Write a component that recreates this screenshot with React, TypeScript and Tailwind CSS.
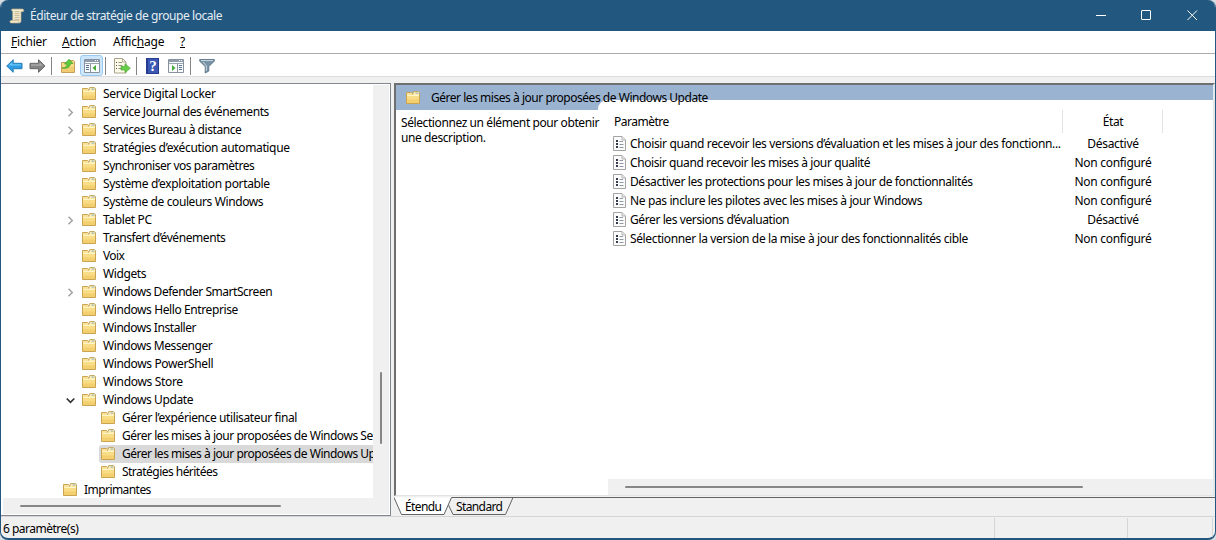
import type { ReactNode } from "react";

type TreeItem = {
  label: string;
  tracking: string;
  level?: number;
  state?: "closed" | "open";
  selected?: boolean;
};

const treeItems: TreeItem[] = [
  { label: "Service Digital Locker", tracking: "tracking-[-0.35px]" },
  { label: "Service Journal des événements", tracking: "tracking-[-0.42px]", state: "closed" },
  { label: "Services Bureau à distance", tracking: "tracking-[-0.45px]", state: "closed" },
  { label: "Stratégies d’exécution automatique", tracking: "tracking-[-0.36px]" },
  { label: "Synchroniser vos paramètres", tracking: "tracking-[-0.46px]" },
  { label: "Système d’exploitation portable", tracking: "tracking-[-0.34px]" },
  { label: "Système de couleurs Windows", tracking: "tracking-[-0.39px]" },
  { label: "Tablet PC", tracking: "tracking-[-0.37px]", state: "closed" },
  { label: "Transfert d’événements", tracking: "tracking-[-0.43px]" },
  { label: "Voix", tracking: "tracking-[-0.6px]" },
  { label: "Widgets", tracking: "tracking-[-0.4px]" },
  { label: "Windows Defender SmartScreen", tracking: "tracking-[-0.47px]", state: "closed" },
  { label: "Windows Hello Entreprise", tracking: "tracking-[-0.4px]" },
  { label: "Windows Installer", tracking: "tracking-[-0.44px]" },
  { label: "Windows Messenger", tracking: "tracking-[-0.44px]" },
  { label: "Windows PowerShell", tracking: "tracking-[-0.37px]" },
  { label: "Windows Store", tracking: "tracking-[-0.33px]" },
  { label: "Windows Update", tracking: "tracking-[-0.41px]", state: "open" },
  { label: "Gérer l’expérience utilisateur final", tracking: "tracking-[-0.39px]", level: 2 },
  { label: "Gérer les mises à jour proposées de Windows Se", tracking: "tracking-[-0.47px]", level: 2 },
  {
    label: "Gérer les mises à jour proposées de Windows Up",
    tracking: "tracking-[-0.47px]",
    level: 2,
    selected: true,
  },
  { label: "Stratégies héritées", tracking: "tracking-[-0.53px]", level: 2 },
  { label: "Imprimantes", tracking: "tracking-[-0.56px]", level: 0 },
];

const settings = [
  {
    name: "Choisir quand recevoir les versions d’évaluation et les mises à jour des fonctionn...",
    tracking: "tracking-[-0.353px]",
    state: "Désactivé",
  },
  {
    name: "Choisir quand recevoir les mises à jour qualité",
    tracking: "tracking-[-0.4px]",
    state: "Non configuré",
  },
  {
    name: "Désactiver les protections pour les mises à jour de fonctionnalités",
    tracking: "tracking-[-0.4px]",
    state: "Non configuré",
  },
  {
    name: "Ne pas inclure les pilotes avec les mises à jour Windows",
    tracking: "tracking-[-0.37px]",
    state: "Non configuré",
  },
  {
    name: "Gérer les versions d’évaluation",
    tracking: "tracking-[-0.4px]",
    state: "Désactivé",
  },
  {
    name: "Sélectionner la version de la mise à jour des fonctionnalités cible",
    tracking: "tracking-[-0.37px]",
    state: "Non configuré",
  },
];

const indents = ["pl-[58px]", "pl-[77px]", "pl-[96px]"];

function FolderIcon() {
  return (
    <svg className="w-4 h-4 shrink-0" viewBox="0 0 16 16" fill="none">
      <path d="M1.5 2.5h5l1 1h7v10h-13z" fill="#fbe29a" stroke="#c9a552" />
      <path d="M7.5 4.5l1.2-2.9h4.8l1 1v2" fill="#fff1bd" stroke="#c2a45c" />
      <path d="M10.500 2.500h3v1.200h-3z" fill="#9fb8b4" />
      <path d="M2 6h12v7H2z" fill="#f9dc86" />
      <path d="M2 9.500h12V13H2z" fill="#f4cf70" />
      <path d="M2 5.500h12" stroke="#fff3c8" />
    </svg>
  );
}

function ScrollIcon() {
  return (
    <svg className="w-4 h-4 shrink-0" viewBox="0 0 16 16" fill="none">
      <path
        d="M3.2 1h10.3c1.600.2 1.700 2.300.4 2.700H12v9.100c0 1.500-.7 2.200-1.700 2.200H2C.6 14.800.4 12.700 2 12.500h1.700V3.300C2.300 2.900 2.100 1.400 3.200 1z"
        fill="#f5ecd3"
        stroke="#b7a77d"
        strokeWidth=".7"
      />
      <path d="M5.500 3.700h5M5.500 5.700h5M5.500 7.700h5M5.500 9.700h5M5.500 11.700h5" stroke="#b3a481" strokeWidth=".8" />
      <path d="M2 12.600h7.500c.8.600.5 1.900 0 2.300" stroke="#c7b88f" strokeWidth=".8" />
    </svg>
  );
}

function SettingIcon() {
  return (
    <svg className="w-[13px] h-[15px] shrink-0" viewBox="0 0 13 15" fill="none">
      <path d="M.5.500h8.500l3.500 3.500v10.500H.5z" fill="#fbfbfb" stroke="#a3a3a3" />
      <path d="M9 .500V4h3.500" fill="#e6e6e6" stroke="#b5b5b5" />
      <path d="M3 4h2v2H3zM3 7h2v2H3zM3 10h2v2H3z" fill="#333b4a" />
      <path d="M6.500 5.500H10M6.500 8.500H10.500M6.500 11.500H10.500" stroke="#8f98a5" />
    </svg>
  );
}

function ArrowIcon({ forward = false }: { forward?: boolean }) {
  return (
    <svg className="w-[17px] h-4 shrink-0" viewBox="0 0 17 16">
      {forward ? (
        <>
          <path d="M16 8L9.500 1.700v3.600H1v5.400h8.500v3.600z" fill="#858585" stroke="#686868" strokeLinejoin="round" />
          <path d="M2 6.300h8.500V4.200l3.700 3.500H2z" fill="#a9a9a9" />
        </>
      ) : (
        <>
          <path d="M.7 8l6.500-6.300v3.600H16v5.400H7.200v3.600z" fill="#2e9be2" stroke="#267db5" strokeLinejoin="round" />
          <path d="M2.400 7.600l3.900-3.700v2.400H15v1.300z" fill="#67c7f5" />
        </>
      )}
    </svg>
  );
}

function FolderUpIcon() {
  return (
    <svg className="w-4 h-4 shrink-0" viewBox="0 0 16 16" fill="none">
      <path d="M1.500 4.500h7l1-2h4l1 1v11h-13z" fill="#f7dc87" stroke="#c3a158" />
      <path d="M2 9h12v5H2z" fill="#f1cc70" />
      <path d="M2 10C5.500 10 7 8.500 7 6H4.500L9 1.200 13 5.500h-2.500C10.300 9 7 11 2 10z" fill="#5ecb3b" stroke="#37992b" strokeWidth=".6" />
    </svg>
  );
}

function PanelIcon({ flipped = false }: { flipped?: boolean }) {
  return (
    <svg className="w-4 h-[14px] shrink-0" viewBox="0 0 16 14" fill="none">
      <path d="M.5.500h15v13H.5z" fill="#fafbfc" stroke="#87919d" />
      <path d="M1 1h14v2H1z" fill="#8f9cad" />
      <path d="M11 1.500h1M13 1.500h1" stroke="#fff" />
      <path d="M1 4.500h14" stroke="#9aa5b2" />
      {flipped ? (
        <>
          <path d="M9.500 5v8" stroke="#8b95a1" />
          <path d="M11 6.500h3M11 8.500h3M11 10.500h3" stroke="#587493" />
          <path d="M4 6l3.500 3L4 12z" fill="#43ad36" />
        </>
      ) : (
        <>
          <path d="M6.500 5v8" stroke="#8b95a1" />
          <path d="M2 6.500h3M2 8.500h3M2 10.500h3" stroke="#587493" />
          <path d="M12 6L8.500 9l3.500 3z" fill="#43ad36" />
        </>
      )}
    </svg>
  );
}

function ExportIcon() {
  return (
    <svg className="w-[17px] h-4 shrink-0" viewBox="0 0 17 16" fill="none">
      <path d="M.5.500h8l3.500 3.500v11H.5z" fill="#fffbe9" stroke="#a9a28d" />
      <path d="M8.500.500V4H12" stroke="#b5ad96" />
      <path d="M2 4.500h1M2 7.500h1M2 10.500h1" stroke="#51564e" />
      <path d="M4.500 4.500H8M4.500 7.500h4M4.500 10.500h3" stroke="#96947e" />
      <path d="M7 8.500h4V5.700l5.300 4.600L11 14.700V12H7z" fill="#69cf49" stroke="#4ca83b" strokeWidth=".7" />
    </svg>
  );
}

function FunnelIcon() {
  return (
    <svg className="w-4 h-4 shrink-0" viewBox="0 0 16 16" fill="none">
      <path d="M.7 1.500h14.600v1.700L9.800 8.500v4.600L6.200 15V8.500L.7 3.200z" fill="#7793a5" stroke="#526b7e" strokeWidth=".8" />
      <path d="M2 2.500h12M4 4l3.300 3.800v5" stroke="#c7d7e0" />
    </svg>
  );
}

function Chevron({ state }: { state?: "closed" | "open" }) {
  return (
    <span className="w-[19px] -ml-[19px] flex items-center shrink-0">
      {state === "closed" && (
        <svg className="ml-[6px] w-[7px] h-[9px]" viewBox="0 0 7 9" fill="none">
          <path d="M1.500.700L5.300 4.500 1.500 8.300" stroke="#a0a0a0" strokeWidth="1.400" />
        </svg>
      )}
      {state === "open" && (
        <svg className="ml-[5px] mt-px w-[9px] h-[7px]" viewBox="0 0 9 7" fill="none">
          <path d="M.7 1.500l3.800 3.800 3.800-3.800" stroke="#333" strokeWidth="1.700" />
        </svg>
      )}
    </span>
  );
}

function Separator({ className }: { className: string }) {
  return <div className={`w-px h-[18px] bg-[#858585] shrink-0 ${className}`} />;
}

function MenuItem({ children, className }: { children: ReactNode; className: string }) {
  return <button className={`text-left shrink-0 ${className}`}>{children}</button>;
}

function TitleBar() {
  return (
    <header className="h-[31px] shrink-0 flex items-center bg-[#22577f] text-[#e4edf4] pl-2">
      <ScrollIcon />
      <span className="ml-[5px] tracking-[-0.43px]">Éditeur de stratégie de groupe locale</span>
      <svg className="ml-auto mr-[17px] w-[102px] h-[11px]" viewBox="0 0 102 11" fill="none" stroke="#fff">
        <path d="M0 5.500h10" />
        <rect x="45.500" y=".5" width="9" height="9" rx=".5" />
        <path d="M91.500.500l9.500 9.500M101 .500L91.500 10" />
      </svg>
    </header>
  );
}

function Toolbar() {
  return (
    <div className="h-[23px] shrink-0 flex items-center bg-white pt-px pl-[5px] border-b border-[#dcdcdc]">
      <ArrowIcon />
      <div className="ml-[6px] flex">
        <ArrowIcon forward />
      </div>
      <Separator className="ml-[5px]" />
      <div className="ml-2 flex">
        <FolderUpIcon />
      </div>
      <div className="ml-1 w-[23px] h-[21px] rounded-[3px] border border-[#9bc9ef] bg-[#cce6fb] flex items-center justify-center shrink-0">
        <PanelIcon />
      </div>
      <Separator className="ml-[2px]" />
      <div className="ml-2 flex">
        <ExportIcon />
      </div>
      <Separator className="ml-[5px]" />
      <div className="ml-[9px] w-[13px] h-4 bg-[#3d57b4] border border-l-2 border-[#263c91] text-white font-bold text-[15px] leading-[14px] text-center font-['Liberation_Serif',serif]">
        ?
      </div>
      <div className="ml-[9px] flex">
        <PanelIcon flipped />
      </div>
      <Separator className="ml-[6px]" />
      <div className="ml-2 flex">
        <FunnelIcon />
      </div>
    </div>
  );
}

function TreePane() {
  return (
    <section className="w-[390px] shrink-0 border-t border-r border-b border-[#828790] bg-white pt-px pl-[2px] pr-px pb-px flex flex-col">
      <div className="h-[413px] flex">
        <div className="w-[370px] pr-px overflow-hidden">
          {treeItems.map((item) => (
            <div key={item.label} className={`h-[18px] flex items-center whitespace-nowrap ${indents[item.level ?? 1]}`}>
              <Chevron state={item.state} />
              <div
                className={`flex items-center h-[18px] pl-px ${item.selected ? "flex-1 bg-[#d9d9d9] rounded-l-[3px]" : ""}`}
              >
                <FolderIcon />
                <span className={`ml-1.5 ${item.tracking}`}>{item.label}</span>
              </div>
            </div>
          ))}
        </div>
        <div className="w-4 bg-[#f0f0f0] flex justify-center pt-[287px]">
          <div className="w-0.5 h-[72px] rounded-full bg-[#868686]" />
        </div>
      </div>
      <div className="h-4 bg-[#f0f0f0] flex items-center pl-[17px]">
        <div className="w-[261px] h-0.5 rounded-full bg-[#868686]" />
      </div>
    </section>
  );
}

function DetailPane() {
  return (
    <section className="flex-1 flex flex-col ml-[3px]">
      <div className="h-[413px] flex flex-col border-t-2 border-l-2 border-r-2 border-t-[#6f6f6f] border-l-[#6f6f6f] border-r-[#e3e8ea] border-b border-b-[#e3e3e3] bg-white relative">
        <div className="h-[25px] shrink-0 bg-[#9ab3d1] flex">
          <div className="ml-[202px] mt-[15px] flex-1 bg-white rounded-tl-[9px]" />
        </div>
        <div className="absolute left-[9px] top-[5px] flex items-center">
          <FolderIcon />
          <span className="ml-[10px] tracking-[-0.47px]">Gérer les mises à jour proposées de Windows Update</span>
        </div>
        <div className="flex flex-1">
          <p className="w-[212px] shrink-0 pl-[5px] pt-[5px] leading-[15px] tracking-[-0.41px] whitespace-nowrap">
            Sélectionnez un élément pour obtenir
            <br />
            une description.
          </p>
          <div className="flex-1 flex flex-col">
            <div className="h-[23px] flex items-center">
              <div className="w-[455px] h-full border-r border-[#e3e3e3] pl-[6px] flex items-center tracking-[-0.5px]">
                Paramètre
              </div>
              <div className="w-[100px] h-full border-r border-[#e3e3e3] pl-px flex items-center justify-center tracking-[-0.4px]">
                État
              </div>
            </div>
            <div className="pt-px">
              {settings.map((setting) => (
                <div key={setting.name} className="h-[19px] flex items-center whitespace-nowrap">
                  <div className="w-[455px] pl-[5px] flex items-center">
                    <SettingIcon />
                    <span className={`ml-1 ${setting.tracking}`}>{setting.name}</span>
                  </div>
                  <div className="w-[100px] text-center tracking-[-0.3px]">{setting.state}</div>
                </div>
              ))}
            </div>
            <div className="mt-auto h-4 bg-[#f0f0f0] flex items-center pl-[17px]">
              <div className="w-[458px] h-0.5 rounded-full bg-[#868686]" />
            </div>
          </div>
        </div>
      </div>
      <div className="h-[20px] flex">
        <svg className="w-full h-full" viewBox="0 0 821 20" fill="none">
          <path d="M0 1.500L7.500 18.500H50L57.500 1.500z" fill="#fff" />
          <path d="M0 1.500L7.500 18.500H50L57.500 1.500H821M119 1.500L111.500 18.500H59L54.500 9" stroke="#636363" />
          <text x="11" y="15" fill="#000" textLength="37">Étendu</text>
          <text x="62" y="15" fill="#000" textLength="47">Standard</text>
        </svg>
      </div>
    </section>
  );
}

export default function App() {
  return (
    <div className="w-[1216px] h-[540px] bg-[#d5dce2]">
      <div className="h-full flex flex-col overflow-hidden rounded-[8px] border-x border-b-2 border-[#22577f] bg-[#f0f0f0] text-black text-[12px] leading-4 font-['Noto_Sans','Open_Sans',sans-serif]">
        <TitleBar />
        <nav className="h-[23px] shrink-0 bg-white border-b border-[#a9adb0] flex items-center pl-[10px] tracking-[-0.21px]">
          <MenuItem className="w-[51px]">
            <u>F</u>ichier
          </MenuItem>
          <MenuItem className="w-[51px]">
            <u>A</u>ction
          </MenuItem>
          <MenuItem className="w-[67px]">
            Affic<u>h</u>age
          </MenuItem>
          <MenuItem className="w-4">
            <u>?</u>
          </MenuItem>
        </nav>
        <Toolbar />
        <main className="mt-[6px] h-[433px] shrink-0 flex">
          <TreePane />
          <DetailPane />
        </main>
        <footer className="flex-1 border-t border-[#d5d5d5] flex pt-px">
          <span className="w-[993px] pl-[2px] pt-[3px] tracking-[-0.5px]">6 paramètre(s)</span>
          <div className="w-[133px] h-5 border-l border-[#d5d5d5]" />
          <div className="w-[86px] h-5 border-x border-[#d5d5d5]" />
        </footer>
      </div>
    </div>
  );
}
